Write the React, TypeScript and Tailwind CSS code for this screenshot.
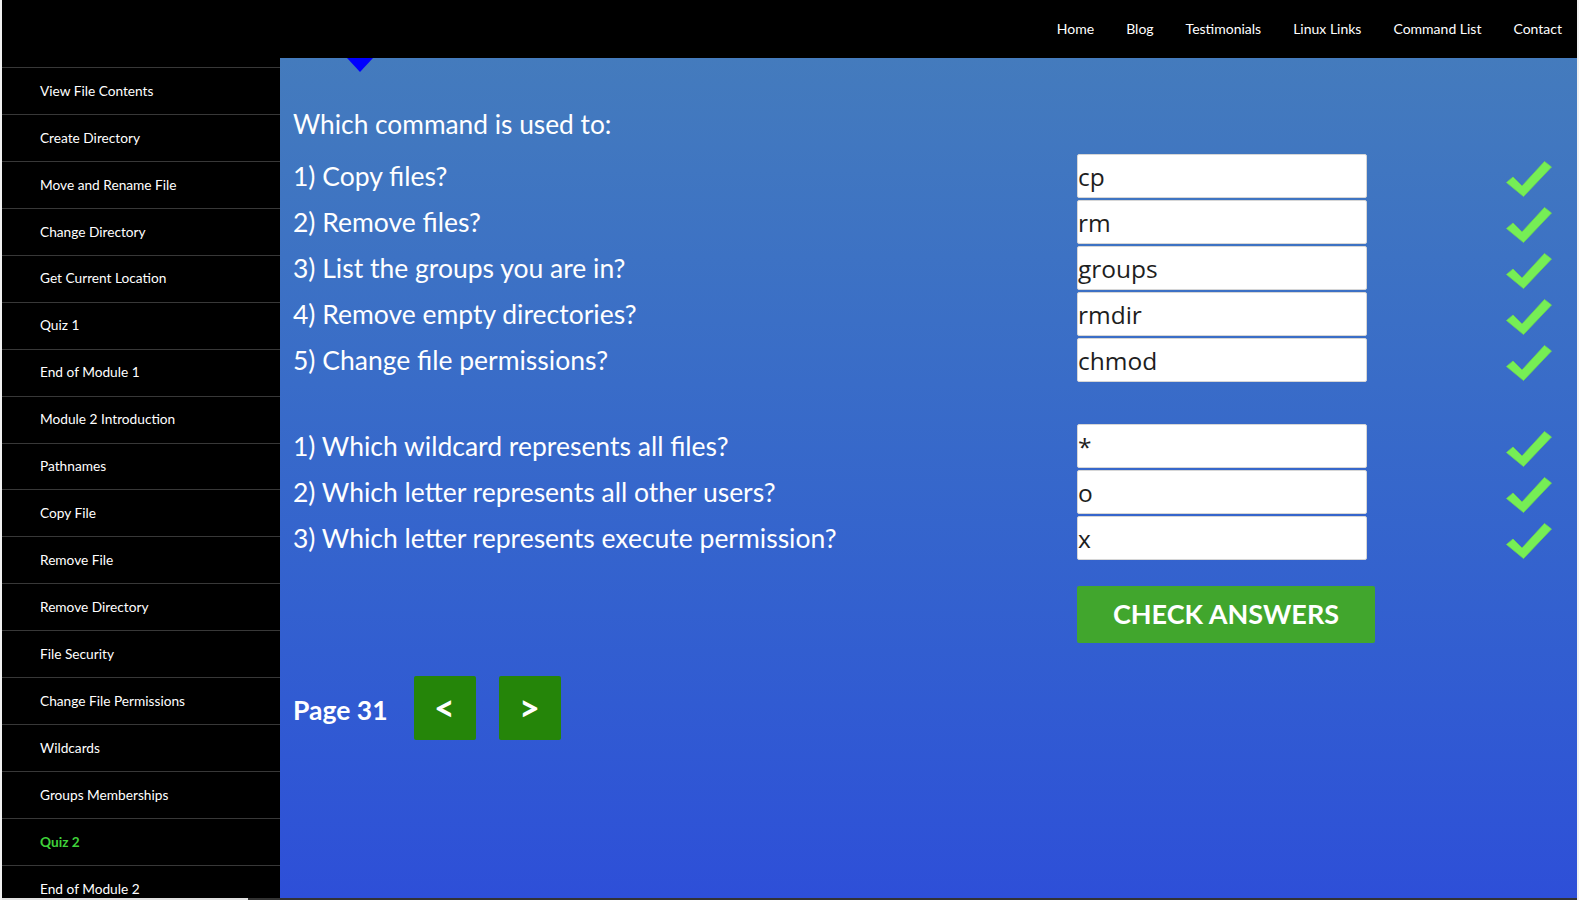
import React from "react";

const navLinks = ["Home", "Blog", "Testimonials", "Linux Links", "Command List", "Contact"];

const sideLinks = [
  "View File Contents",
  "Create Directory",
  "Move and Rename File",
  "Change Directory",
  "Get Current Location",
  "Quiz 1",
  "End of Module 1",
  "Module 2 Introduction",
  "Pathnames",
  "Copy File",
  "Remove File",
  "Remove Directory",
  "File Security",
  "Change File Permissions",
  "Wildcards",
  "Groups Memberships",
  "Quiz 2",
  "End of Module 2",
];

const commandQs = [
  { q: "1) Copy files?", a: "cp" },
  { q: "2) Remove files?", a: "rm" },
  { q: "3) List the groups you are in?", a: "groups" },
  { q: "4) Remove empty directories?", a: "rmdir" },
  { q: "5) Change file permissions?", a: "chmod" },
];

const wildcardQs = [
  { q: "1) Which wildcard represents all files?", a: "*" },
  { q: "2) Which letter represents all other users?", a: "o" },
  { q: "3) Which letter represents execute permission?", a: "x" },
];

function Tick() {
  return (
    <svg width="46" height="36" viewBox="0 0 46 36" aria-hidden="true">
      <path
        d="M0.5 21.5 L7 16 L16 25 L38.5 0.5 L45.5 6 L17.5 35.5 Z"
        fill="#76ee55"
        stroke="#6fd84f"
        strokeWidth="0.8"
        strokeLinejoin="round"
      />
    </svg>
  );
}

function QuestionRow({ q, a }: { q: string; a: string }) {
  return (
    <div className="grid grid-cols-[784px_290px_1fr] h-[44px] items-center">
      <span className="text-[26.5px] text-white leading-none">{q}</span>
      <input
        readOnly
        value={a}
        className="h-[44px] w-[290px] rounded-[2px] border border-[#d6d6d6] bg-white px-0 text-[24.5px] text-[#1e1e1e] font-['Open_Sans',sans-serif] outline-none"
      />
      <div className="pl-[139px] pt-[6px]">
        <Tick />
      </div>
    </div>
  );
}

export default function App() {
  return (
    <div className="h-[900px] w-full overflow-hidden bg-[#f0f0f0] pl-[2px] pr-[2px] font-['Lato',sans-serif]">
      <div className="flex h-[898px] flex-col">
        {/* top bar */}
        <header className="flex h-[58px] shrink-0 items-center justify-end gap-[32px] bg-black pr-[15px] pb-[2px]">
          {navLinks.map((l) => (
            <a key={l} href="#" className="text-[14px] text-white">
              {l}
            </a>
          ))}
        </header>

        <div className="flex min-h-0 flex-1">
          {/* sidebar */}
          <aside className="w-[278px] shrink-0 bg-black pt-[9px]">
            {sideLinks.map((l) => (
              <a
                key={l}
                href="#"
                className={
                  "flex h-[46.95px] items-center border-t border-[#383838] pl-[38px] text-[13.7px] " +
                  (l === "Quiz 2" ? "font-bold text-[#3fd13a]" : "text-white")
                }
              >
                {l}
              </a>
            ))}
          </aside>

          {/* quiz panel */}
          <main className="relative flex-1 bg-gradient-to-b from-[#447bbd] to-[#2e4fd8] pl-[13px] pt-[50px]">
            <div className="absolute left-[67px] top-0 h-0 w-0 border-x-[13px] border-t-[14px] border-x-transparent border-t-[#0000ff]" />

            <h2 className="h-[32px] text-[26.3px] leading-[32px] text-white">Which command is used to:</h2>

            <div className="mt-[14px] flex flex-col gap-[2px]">
              {commandQs.map((r) => (
                <QuestionRow key={r.q} {...r} />
              ))}
            </div>

            <div className="mt-[42px] flex flex-col gap-[2px]">
              {wildcardQs.map((r) => (
                <QuestionRow key={r.q} {...r} />
              ))}
            </div>

            <div className="mt-[26px] pl-[784px]">
              <button className="h-[57px] w-[298px] rounded-[2px] bg-[#41a62d] text-[27px] font-bold text-white">
                CHECK ANSWERS
              </button>
            </div>

            <div className="mt-[33px] flex items-center">
              <span className="mr-[26px] mt-[6px] text-[26.5px] font-bold text-white">Page 31</span>
              <button className="flex h-[64px] w-[62px] items-center justify-center rounded-[2px] bg-[#258509] pb-[2px] text-[36px] font-bold text-white">
                &lt;
              </button>
              <button className="ml-[23px] flex h-[64px] w-[62px] items-center justify-center rounded-[2px] bg-[#258509] pb-[2px] text-[36px] font-bold text-white">
                &gt;
              </button>
            </div>
          </main>
        </div>
      </div>
      <div className="flex h-[2px]">
        <div className="w-[246px] bg-[#e2e2e2]" />
        <div className="flex-1 bg-[#333]" />
      </div>
    </div>
  );
}
